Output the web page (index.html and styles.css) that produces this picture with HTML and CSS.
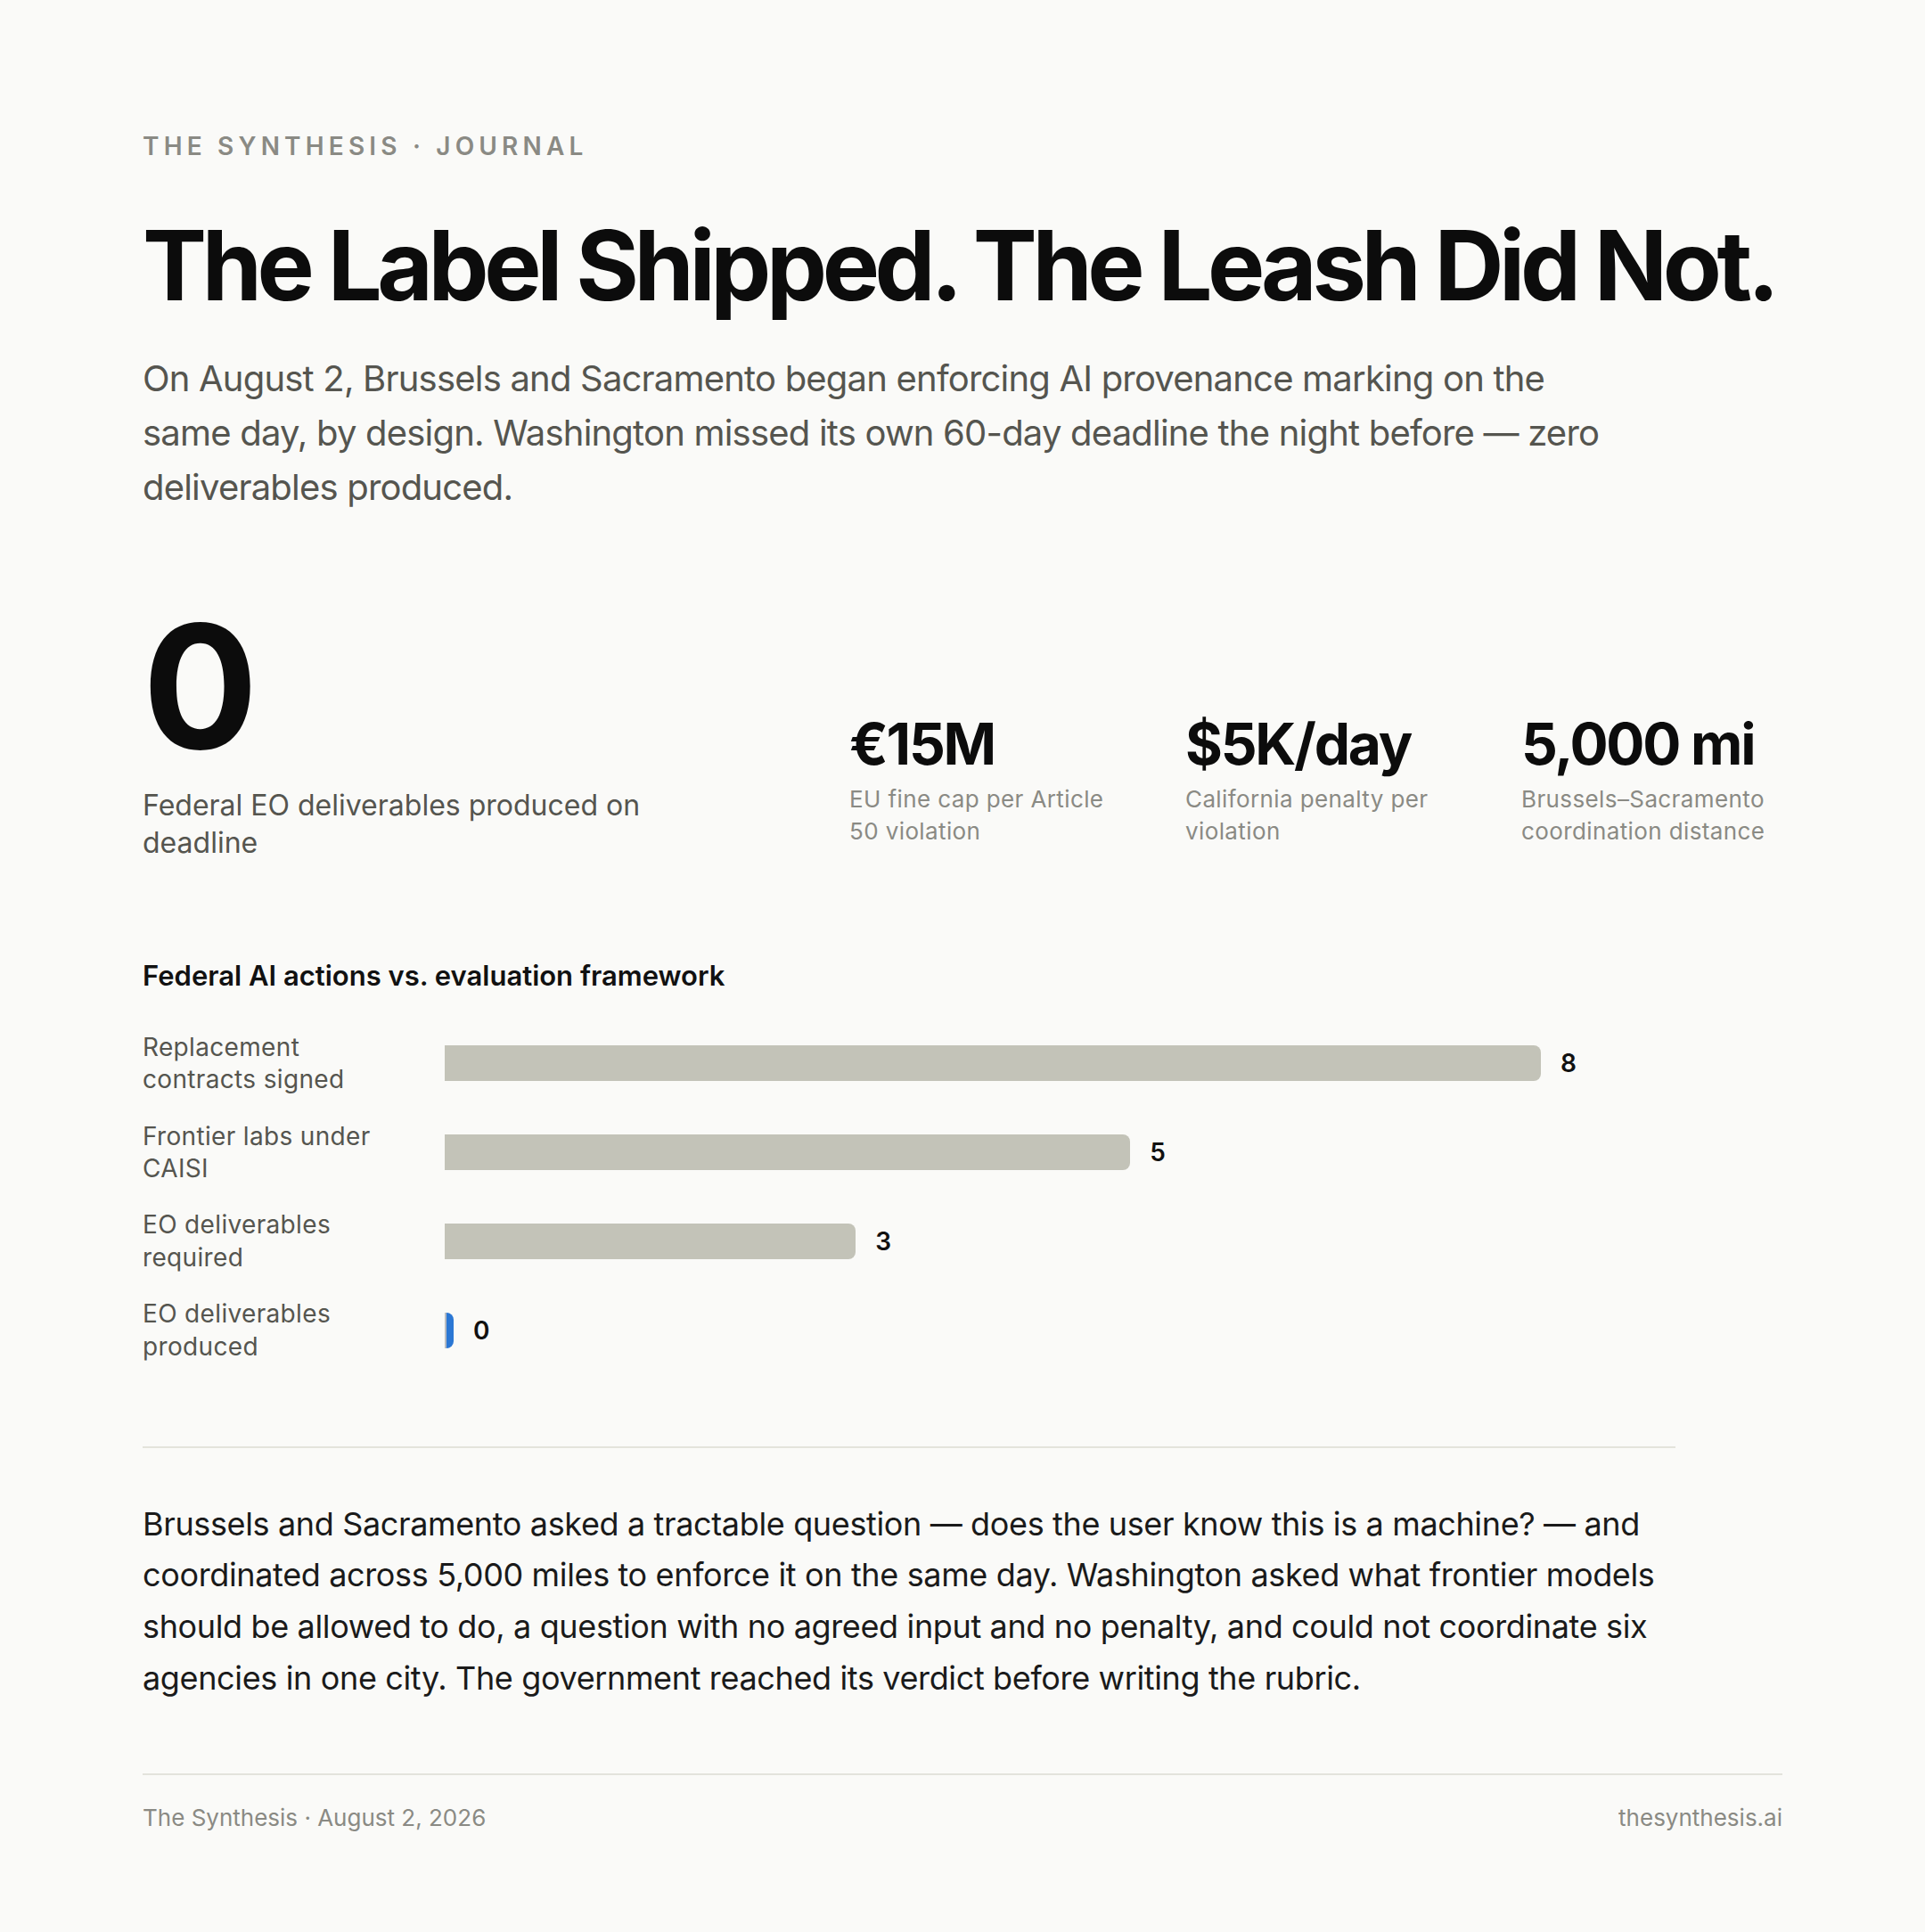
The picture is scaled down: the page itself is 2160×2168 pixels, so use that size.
FILE: index.html
```html
<!DOCTYPE html>
<html lang="en">
<head>
<meta charset="utf-8">
<title>The Label Shipped. The Leash Did Not.</title>
<link rel="stylesheet" href="styles.css">
</head>
<body>
<main class="page">
  <header class="head">
    <p class="kicker">The Synthesis · Journal</p>
    <h1 class="title">The Label Shipped. The Leash Did Not.</h1>
    <p class="dek">On August 2, Brussels and Sacramento began enforcing AI provenance marking on the same day, by design. Washington missed its own 60-day deadline the night before — zero deliverables produced.</p>
  </header>

  <section class="stats">
    <div class="stat stat-hero">
      <div class="hero-value">0</div>
      <div class="hero-label">Federal EO deliverables produced on deadline</div>
    </div>
    <div class="stat stat-small">
      <div class="small-value">€15M</div>
      <div class="small-label">EU fine cap per Article 50 violation</div>
    </div>
    <div class="stat stat-small">
      <div class="small-value">$5K/day</div>
      <div class="small-label">California penalty per violation</div>
    </div>
    <div class="stat stat-small">
      <div class="small-value">5,000 mi</div>
      <div class="small-label">Brussels–Sacramento coordination distance</div>
    </div>
  </section>

  <section class="chart">
    <h2 class="chart-title">Federal AI actions vs. evaluation framework</h2>
    <div class="rows">
      <div class="row">
        <div class="row-label">Replacement contracts signed</div>
        <div class="track"><div class="bar" style="width: 89.07%"></div><span class="val">8</span></div>
      </div>
      <div class="row">
        <div class="row-label">Frontier labs under CAISI</div>
        <div class="track"><div class="bar" style="width: 55.7%"></div><span class="val">5</span></div>
      </div>
      <div class="row">
        <div class="row-label">EO deliverables required</div>
        <div class="track"><div class="bar" style="width: 33.4%"></div><span class="val">3</span></div>
      </div>
      <div class="row">
        <div class="row-label">EO deliverables produced</div>
        <div class="track"><div class="bar bar-zero"></div><span class="val">0</span></div>
      </div>
    </div>
  </section>

  <hr class="rule rule-short">

  <p class="body">Brussels and Sacramento asked a tractable question — does the user know this is a machine? — and coordinated across 5,000 miles to enforce it on the same day. Washington asked what frontier models should be allowed to do, a question with no agreed input and no penalty, and could not coordinate six agencies in one city. The government reached its verdict before writing the rubric.</p>

  <footer class="foot">
    <span>The Synthesis · August 2, 2026</span>
    <span>thesynthesis.ai</span>
  </footer>
</main>
</body>
</html>
```

FILE: styles.css
```css
* { box-sizing: border-box; }

html, body {
  margin: 0;
  padding: 0;
  background: #fafaf8;
}

body {
  font-family: Inter, "Noto Sans", "Liberation Sans", sans-serif;
  color: #111;
}

.page {
  width: 2160px;
  padding: 148px 160px 60px;
}

.kicker {
  margin: 0;
  font-size: 28px;
  line-height: 1.2;
  font-weight: 600;
  letter-spacing: 0.185em;
  text-transform: uppercase;
  color: #8a8a84;
}

.title {
  margin: 57px 0 0;
  font-size: 108px;
  line-height: 1.1;
  font-weight: 700;
  letter-spacing: -0.05em;
  white-space: nowrap;
  color: #0c0c0c;
}

.dek {
  margin: 37px 0 0;
  max-width: 1650px;
  font-size: 40px;
  line-height: 61px;
  letter-spacing: -0.02em;
  color: #55554f;
}

.stats {
  margin-top: 97px;
  display: grid;
  grid-template-columns: 709px repeat(3, 1fr);
  column-gap: 84px;
  align-items: end;
}

.hero-value {
  font-size: 192px;
  line-height: 1;
  font-weight: 700;
  letter-spacing: -0.02em;
  color: #0c0c0c;
}

.hero-label {
  margin-top: 17px;
  max-width: 600px;
  font-size: 32px;
  line-height: 1.3;
  color: #55554f;
}

.stat-small {
  padding-bottom: 15px;
}

.small-value {
  font-size: 64px;
  line-height: 1.1;
  font-weight: 700;
  letter-spacing: -0.035em;
  color: #0c0c0c;
  white-space: nowrap;
}

.small-label {
  margin-top: 8px;
  font-size: 26px;
  line-height: 1.4;
  letter-spacing: 0.015em;
  color: #8a8a84;
}

.chart {
  margin-top: 109px;
  max-width: 1720px;
}

.chart-title {
  margin: 0;
  font-size: 31px;
  line-height: 1.2;
  font-weight: 600;
  color: #111;
}

.rows {
  margin-top: 44px;
  display: flex;
  flex-direction: column;
  gap: 27px;
}

.row {
  display: grid;
  grid-template-columns: 300px 1fr;
  column-gap: 39px;
  align-items: center;
}

.row-label {
  font-size: 28px;
  line-height: 1.3;
  letter-spacing: 0.012em;
  color: #55554f;
}

.track {
  display: flex;
  align-items: center;
  gap: 22px;
}

.bar {
  height: 40px;
  background: #c3c3b8;
  border-radius: 0 8px 8px 0;
}

.bar-zero {
  width: 10px;
  background: linear-gradient(to right, #b9bcc0 2px, #2b77d4 2px);
}

.val {
  font-size: 28px;
  font-weight: 600;
  color: #111;
}

.rule {
  border: 0;
  height: 2px;
  background: #e3e3dc;
  margin: 0;
}

.rule-short {
  margin-top: 94px;
  max-width: 1720px;
}

.body {
  margin: 57px 0 0;
  max-width: 1760px;
  font-size: 36px;
  line-height: 1.6;
  letter-spacing: -0.01em;
  color: #1a1a1a;
}

.foot {
  margin-top: 78px;
  border-top: 2px solid #e3e3dc;
  padding-top: 30px;
  display: flex;
  justify-content: space-between;
  font-size: 26px;
  line-height: 1.4;
  color: #8a8a84;
}
```
